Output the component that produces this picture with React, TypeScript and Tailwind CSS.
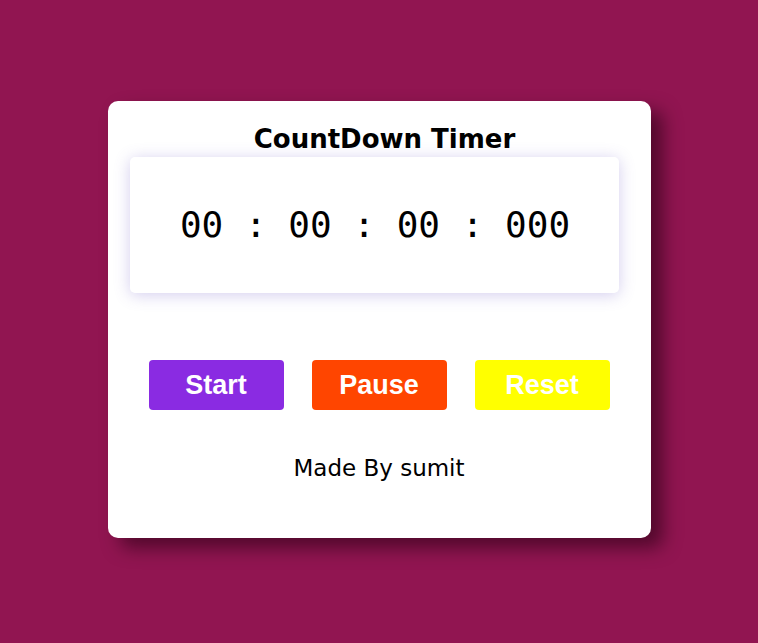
import React from "react";

const pad = (n: number, len = 2) => String(n).padStart(len, "0");

export default function App() {
  const [ms] = React.useState(0);

  const hours = Math.floor(ms / 3600000);
  const minutes = Math.floor((ms % 3600000) / 60000);
  const seconds = Math.floor((ms % 60000) / 1000);
  const millis = ms % 1000;

  return (
    <div className="w-full h-screen flex items-center justify-center bg-[#911551]">
      <div
        className="w-[543px] h-[437px] mb-[4px] bg-white rounded-[10px] shadow-[12px_10px_18px_rgba(40,0,20,0.6)] flex flex-col pt-[20px]"
        style={{ fontFamily: '"DejaVu Sans", sans-serif' }}
      >
        <h1 className="text-[26px] font-bold text-black text-center leading-[36px] pl-[11px]">
          CountDown Timer
        </h1>
        <div className="ml-[22px] w-[489px] h-[136px] bg-white rounded-[5px] shadow-[0_2px_16px_rgba(110,90,200,0.3)] flex items-center justify-center">
          <span
            className="text-[36px] text-black pl-[2px]"
            style={{ fontFamily: '"DejaVu Sans Mono", monospace' }}
          >
            {pad(hours)} : {pad(minutes)} : {pad(seconds)} : {pad(millis, 3)}
          </span>
        </div>
        <div
          className="flex justify-center gap-[28px] mt-[67px]"
          style={{ fontFamily: '"Liberation Sans", Arial, sans-serif' }}
        >
          <button className="w-[135px] h-[50px] rounded-[4px] bg-[#8a2be2] text-white text-[27px] font-bold leading-none">
            Start
          </button>
          <button className="w-[135px] h-[50px] rounded-[4px] bg-[#ff4500] text-white text-[27px] font-bold leading-none">
            Pause
          </button>
          <button className="w-[135px] h-[50px] rounded-[4px] bg-[#ffff00] text-white text-[27px] font-bold leading-none">
            Reset
          </button>
        </div>
        <p className="text-center text-[23px] text-black mt-[43px] leading-[30px]">
          Made By sumit
        </p>
      </div>
    </div>
  );
}
